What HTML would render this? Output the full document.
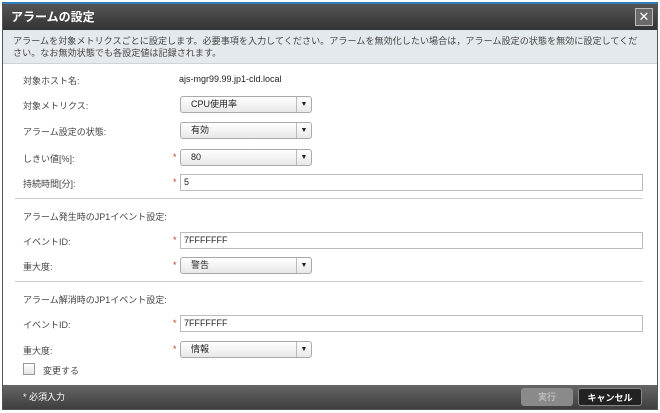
<!DOCTYPE html>
<html><head><meta charset="utf-8"><style>
*{box-sizing:border-box;margin:0;padding:0}
body{width:660px;height:413px;background:#fff;font-family:"Liberation Sans","Noto Sans CJK JP",sans-serif;font-size:9px;color:#333;position:relative;overflow:hidden}
.dlg{position:absolute;left:2px;top:2px;width:656px;height:408px;border:1px solid #555;border-top:2px solid #2f7fbf;background:#fff}
.title{position:absolute;left:0;top:0;width:654px;height:26px;background:linear-gradient(#555,#333);color:#fff;font-size:12px;font-weight:bold;line-height:26px;padding-left:8px}
.close{position:absolute;right:4px;top:4px;width:18px;height:18px;border:1px solid #bbb;background:#6a6a6a;color:#fff;font-size:13px;line-height:16px;text-align:center;font-weight:normal}
.desc{position:absolute;left:0;top:26px;width:654px;height:34px;background:#e4e9ee;border-bottom:1px solid #cdd3d9;padding:5px 12px 5px 10px;line-height:12px;color:#444;font-size:9.1px}
.l{position:absolute;left:20px;color:#444}
.v{position:absolute;left:176px;color:#222}
.ast{position:absolute;left:170px;color:#c0392b}
.sel{position:absolute;left:177px;width:132px;height:17px;border:1px solid #aaa;border-radius:3px;background:linear-gradient(#fff,#e8e8e8);padding-left:10px;line-height:15px;color:#222}
.sel:after{content:"▼";position:absolute;right:0;top:0;width:14px;height:15px;border-left:1px solid #bbb;font-size:7px;text-align:center;line-height:15px}
.inp{position:absolute;left:177px;width:463px;height:17px;border:1px solid #bbb;background:#fff;padding-left:3px;line-height:15px;color:#222}
.sep{position:absolute;left:12px;width:628px;height:1px;background:#ccc}
.foot{position:absolute;left:0;bottom:0;width:654px;height:24px;background:linear-gradient(#666,#3e3e3e);color:#fff;line-height:24px;padding-left:20px}
.btn{position:absolute;top:3px;height:18px;border-radius:3px;text-align:center;line-height:18px;font-weight:bold}
</style></head><body>
<div class="dlg">
<div class="title">アラームの設定<div class="close">✕</div></div>
<div class="desc">アラームを対象メトリクスごとに設定します。必要事項を入力してください。アラームを無効化したい場合は，アラーム設定の状態を無効に設定してください。なお無効状態でも各設定値は記録されます。</div>
<div class="l" style="top:70px">対象ホスト名:</div><div class="v" style="top:70px">ajs-mgr99.99.jp1-cld.local</div>
<div class="l" style="top:95px">対象メトリクス:</div><div class="sel" style="top:92px">CPU使用率</div>
<div class="l" style="top:121px">アラーム設定の状態:</div><div class="sel" style="top:118px">有効</div>
<div class="l" style="top:148px">しきい値[%]:</div><div class="ast" style="top:148px">*</div><div class="sel" style="top:145px">80</div>
<div class="l" style="top:173px">持続時間[分]:</div><div class="ast" style="top:173px">*</div><div class="inp" style="top:170px">5</div>
<div class="sep" style="top:194px"></div>
<div class="l" style="top:206px">アラーム発生時のJP1イベント設定:</div>
<div class="l" style="top:231px">イベントID:</div><div class="ast" style="top:231px">*</div><div class="inp" style="top:228px">7FFFFFFF</div>
<div class="l" style="top:256px">重大度:</div><div class="ast" style="top:256px">*</div><div class="sel" style="top:253px">警告</div>
<div class="sep" style="top:277px"></div>
<div class="l" style="top:289px">アラーム解消時のJP1イベント設定:</div>
<div class="l" style="top:314px">イベントID:</div><div class="ast" style="top:314px">*</div><div class="inp" style="top:311px">7FFFFFFF</div>
<div class="l" style="top:340px">重大度:</div><div class="ast" style="top:340px">*</div><div class="sel" style="top:337px">情報</div>
<div style="position:absolute;left:20px;top:359px;width:12px;height:12px;border:1px solid #999;background:linear-gradient(#fff,#e5e5e5)"></div>
<div class="l" style="left:40px;top:360px">変更する</div>
<div class="foot">* 必須入力
<div class="btn" style="left:518px;width:52px;background:#8a8a8a;color:#bbb">実行</div>
<div class="btn" style="left:575px;width:64px;background:#222;border:1px solid #888;color:#fff">キャンセル</div>
</div>
</div>
</body></html>
